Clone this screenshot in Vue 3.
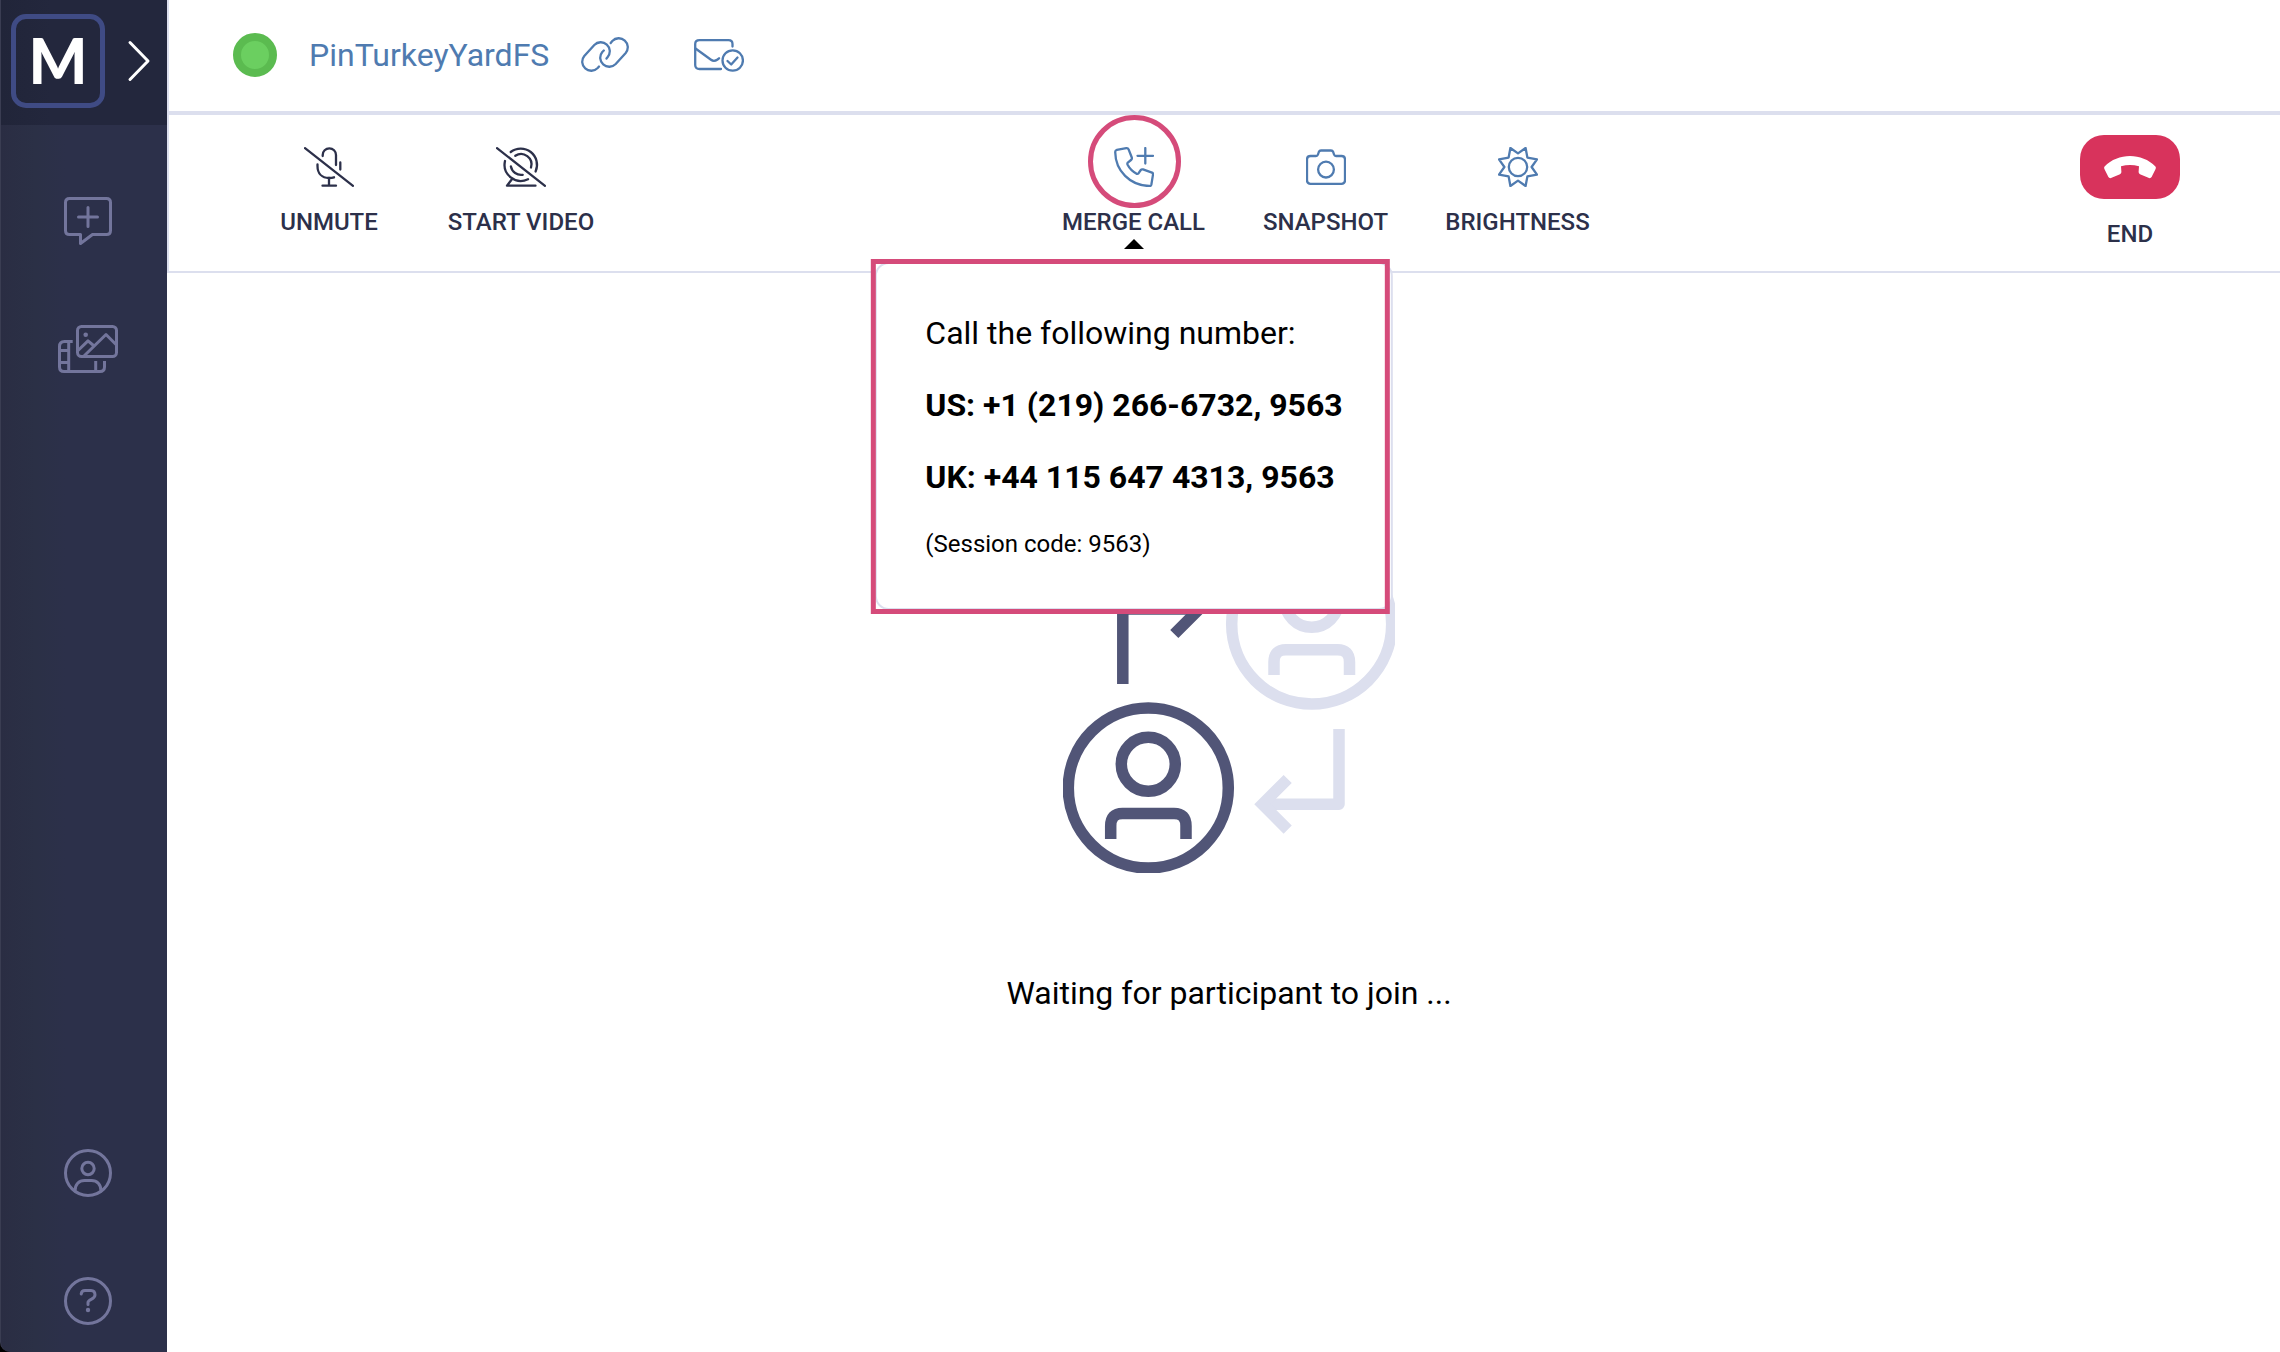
<template>
  <div class="app-shell">
    <!-- Sidebar -->
    <aside class="sidebar">
      <div class="brand">
        <a href="#" class="logo" aria-label="Home">M</a>
        <button type="button" class="expand-btn" aria-label="Expand menu">
          <svg width="24" height="42" viewBox="0 0 24 42" class="chevron">
            <path d="M3 2.5L21 21L3 39.5" />
          </svg>
        </button>
      </div>

      <nav class="side-nav">
        <div class="nav-group">
          <a href="#" class="nav-link" aria-label="New session">
            <svg width="48" height="48" viewBox="0 0 48 48">
              <path d="M5.5 1.5H42.5Q46.5 1.5 46.5 5.5V33.5Q46.5 37.5 42.5 37.5H28.5L16.5 46.5V37.5H5.5Q1.5 37.5 1.5 33.5V5.5Q1.5 1.5 5.5 1.5Z" />
              <path d="M24 10.5V29.5M14.5 20H33.5" />
            </svg>
          </a>
          <a href="#" class="nav-link" aria-label="Media gallery">
            <svg width="60" height="48" viewBox="0 0 60 48">
              <rect x="19.5" y="1.5" width="39" height="30" rx="4" />
              <circle cx="27.7" cy="9.7" r="2.3" class="solid" />
              <path d="M26 31L48 9.5L58 19.5M20 25.5L30 15.8L35.5 20.5" />
              <path class="butt" d="M14.7 16.5H6.5Q1.5 16.5 1.5 21.5V42Q1.5 46.5 6 46.5H42Q46.5 46.5 46.5 42V36" />
              <path class="butt" d="M10.7 16.5V46.5M37.7 36V46.5M1.5 25.5H10.7M1.5 37.5H10.7" />
            </svg>
          </a>
        </div>
        <div class="nav-group">
          <a href="#" class="nav-link" aria-label="Account">
            <svg width="48" height="48" viewBox="0 0 48 48">
              <circle cx="24" cy="24" r="22.5" />
              <circle cx="24" cy="19.5" r="6.2" />
              <path d="M11 42C11 35.5 15 31.5 20.5 31.5H27.5C33 31.5 37 35.5 37 42" />
            </svg>
          </a>
          <a href="#" class="nav-link" aria-label="Help">
            <svg width="48" height="48" viewBox="0 0 48 48">
              <circle cx="24" cy="24" r="22.5" />
              <path d="M17.2 17Q17.5 13.5 21 13.5H27Q31 13.5 31 18C31 22.5 24 22 24 25.5V27.5" />
              <circle cx="24" cy="33" r="2.2" class="solid" />
            </svg>
          </a>
        </div>
      </nav>
    </aside>

    <main class="main">
      <!-- Session header -->
      <header class="session-bar">
        <span class="status-dot"></span>
        <span class="session-name">{{ sessionName }}</span>
        <button type="button" class="icon-btn" aria-label="Copy link">
          <svg width="48" height="36" viewBox="0 0 48 36">
            <path d="M18 29.5L16.7 31A9 9 0 0 1 3.3 19L13.3 8A9 9 0 0 1 26.7 20L25.5 21.5" />
            <path d="M29.7 6L31.3 4A9 9 0 0 1 44.7 16L34.7 27A9 9 0 0 1 21.3 15L22.8 13.5" />
          </svg>
        </button>
        <button type="button" class="icon-btn mail-btn" aria-label="Send invite">
          <svg width="50" height="36" viewBox="0 0 50 36">
            <path d="M27 32H5.5Q1.2 32 1.2 28V7Q1.2 3.2 5.5 3.2H34.5Q38.5 3.2 38.5 7V9.5" />
            <path d="M1.5 11.5L17 22.8Q20 25 23.5 22.5L25 21.3" />
            <circle cx="38.7" cy="23.5" r="10.2" />
            <path d="M33.5 24L37.2 27.5L43.5 20.5" />
          </svg>
        </button>
      </header>

      <!-- Call toolbar -->
      <section class="toolbar">
        <div class="tool-group">
          <button type="button" class="tool">
            <svg class="tool-icon muted" width="50" height="40" viewBox="0 0 50 40">
              <path d="M1 1.2L49 38.8" />
              <path d="M18.7 9V8A6.6 6.6 0 0 1 32 8V18" />
              <path d="M13.5 17.5V19C13.5 26.5 18 31 25 31Q28 31 30 30.3" />
              <path d="M36.3 15.5V22.5M25 31V38.7M18.5 38.7H32" />
            </svg>
            <span class="tool-label">UNMUTE</span>
          </button>
          <button type="button" class="tool">
            <svg class="tool-icon muted" width="50" height="40" viewBox="0 0 50 40">
              <path d="M1 1.2L49 38.8" />
              <path d="M14.7 5A16.3 16.3 0 0 1 39.6 24.5" />
              <path d="M9 14A16.3 16.3 0 0 0 32 32.3" />
              <path d="M19.3 8.8A10.4 10.4 0 0 1 35 20.5" />
              <path d="M14.9 19.5A10.4 10.4 0 0 0 26.7 27.8" />
              <path d="M15.7 32.5L11 38.7H39.5" />
            </svg>
            <span class="tool-label">START VIDEO</span>
          </button>
        </div>

        <div class="tool-group">
          <div class="tool-wrap">
            <button type="button" class="tool" :aria-expanded="mergeOpen" @click="mergeOpen = !mergeOpen">
              <svg class="tool-icon" width="40" height="40" viewBox="0 0 40 40">
                <path d="M2.8 2.8L12.3 1.2Q14 1 14.6 2.4L17.8 10.5Q18.2 12 17 13L13.8 15.6Q13 16.5 13.6 17.8C15.5 21.5 18.5 24.5 22.6 26.8Q23.8 27.2 24.6 26.2L26.8 23Q27.6 22 29 22.4L38 25.6Q39.3 26.2 39 27.6L37.4 37.4Q37 39.2 35.2 39C16 38.5 1.5 24 1.2 5Q1.2 3.2 2.8 2.8Z" />
                <path d="M31.3 1V16.5M23.5 8.8H39" />
              </svg>
              <span class="tool-label">MERGE CALL</span>
            </button>
            <span class="highlight-ring"></span>
            <span v-if="mergeOpen" class="popover-arrow"></span>
            <div v-if="mergeOpen" class="popover">
              <p>Call the following number:</p>
              <p v-for="n in numbers" :key="n.region" class="number">{{ n.region }}: {{ n.phone }}, {{ sessionCode }}</p>
              <p class="code">(Session code: {{ sessionCode }})</p>
            </div>
          </div>
          <button type="button" class="tool">
            <svg class="tool-icon" width="40" height="40" viewBox="0 0 40 40">
              <path d="M4.5 9H10Q11.5 9 12 7.5L12.8 5Q13.4 3.5 15 3.5H25Q26.6 3.5 27.2 5L28 7.5Q28.5 9 30 9H35.5Q39 9 39 12.5V33.3Q39 36.8 35.5 36.8H4.5Q1 36.8 1 33.3V12.5Q1 9 4.5 9Z" />
              <circle cx="20" cy="22.6" r="7.9" />
            </svg>
            <span class="tool-label">SNAPSHOT</span>
          </button>
          <button type="button" class="tool">
            <svg class="tool-icon" width="40" height="40" viewBox="0 0 40 40">
              <path d="M12.4 1L20 6.4L27.6 1L29.4 10.6L39 12.4L33.6 20L39 27.6L29.4 29.4L27.6 39L20 33.6L12.4 39L10.6 29.4L1 27.6L6.4 20L1 12.4L10.6 10.6Z" />
              <circle cx="20" cy="20" r="9.2" />
            </svg>
            <span class="tool-label">BRIGHTNESS</span>
          </button>
        </div>

        <div class="tool-group">
          <button type="button" class="tool end-tool">
            <span class="end-pill">
              <svg width="52" height="23" viewBox="0 0 52 23">
                <path d="M0.6 10.5C14 -3.5 38 -3.5 51.4 10.5Q52.2 11.5 51.6 13L47.6 21Q46.7 22.5 45 22L36 18.3Q34.6 17.6 34.6 16L35 10.3Q26 7.5 17 10.3L17.4 16Q17.4 17.6 16 18.3L7 22Q5.3 22.5 4.4 21L0.4 13Q-0.2 11.5 0.6 10.5Z" />
              </svg>
            </span>
            <span class="tool-label">END</span>
          </button>
        </div>
      </section>

      <!-- Waiting room -->
      <section class="stage">
        <svg class="waiting-art" width="332" height="332" viewBox="0 0 332 332">
          <g class="art-light">
            <circle cx="248.7" cy="83" r="80" />
            <circle cx="248.7" cy="59.3" r="27" />
            <path d="M211 134V121Q211 108.7 223 108.7H274.5Q286.5 108.7 286.5 121V134" />
            <path d="M276 188V263.3H199.4" class="round-join" />
            <path d="M224.7 238L199.4 263.3L224.7 288.6" />
          </g>
          <g class="art-dark">
            <circle cx="85.3" cy="247" r="80" />
            <circle cx="85.3" cy="223.3" r="27" />
            <path d="M47.7 298V285Q47.7 272.4 59.5 272.4H111Q123 272.4 123 285V298" />
            <path d="M59.8 143V68H136.3" class="round-join" />
            <path d="M111.3 93L136.3 68L111.3 43" />
          </g>
        </svg>
        <p class="waiting-text">Waiting for participant to join ...</p>
      </section>
    </main>
  </div>
</template>

<script setup>
import { ref } from 'vue'

const sessionName = 'PinTurkeyYardFS'
const sessionCode = '9563'

const numbers = [
  { region: 'US', phone: '+1 (219) 266-6732' },
  { region: 'UK', phone: '+44 115 647 4313' }
]

const mergeOpen = ref(true)
</script>

<style>
body {
  margin: 0;
  background: #fff;
}
</style>

<style scoped>
.app-shell {
  display: flex;
  min-height: 100vh;
  background: #000;
  color: #000;
  font-family: Roboto, "Liberation Sans", sans-serif;
  font-size: 32px;
  line-height: 40px;
}

button {
  padding: 0;
  border: 0;
  background: none;
  font: inherit;
  color: inherit;
  cursor: pointer;
}

p {
  margin: 0;
}

svg {
  display: block;
  fill: none;
}

/* Sidebar */
.sidebar {
  flex: 0 0 167px;
  box-sizing: border-box;
  display: flex;
  flex-direction: column;
  border-left: 1px solid #3a3d52;
  border-bottom-left-radius: 10px;
  background: linear-gradient(90deg, #2a2d43 0, #2b3046 34px, #2c304a 64px);
}

.brand {
  display: flex;
  align-items: center;
  gap: 22px;
  height: 125px;
  box-sizing: border-box;
  padding: 0 0 3px 10px;
  background: linear-gradient(90deg, #212539 0, #23273d 50px);
}

.logo {
  box-sizing: border-box;
  width: 94px;
  height: 94px;
  border: 5px solid #3f4b84;
  border-radius: 15px;
  color: #fff;
  font-family: Lato, "DejaVu Sans", sans-serif;
  font-size: 62px;
  font-weight: 900;
  line-height: 82px;
  text-align: center;
  text-decoration: none;
}

.chevron {
  stroke: #fff;
  stroke-width: 3;
  stroke-linecap: round;
  stroke-linejoin: round;
}

.side-nav {
  flex: 1;
  display: flex;
  flex-direction: column;
  justify-content: space-between;
  padding: 72px 0 27px 8px;
}

.nav-group {
  display: flex;
  flex-direction: column;
  align-items: center;
  gap: 80px;
}

.nav-link svg {
  stroke: #73759c;
  stroke-width: 3;
  stroke-linecap: round;
  stroke-linejoin: round;
}

.nav-link .butt {
  stroke-linecap: butt;
}

.nav-link .solid {
  fill: #73759c;
  stroke: none;
}

/* Header */
.main {
  flex: 1;
  min-width: 0;
  background: #fff;
}

.session-bar {
  display: flex;
  align-items: center;
  gap: 32px;
  height: 109px;
  padding: 0 0 2px 64px;
  border-left: 2px solid #dcdfee;
  border-bottom: 4px solid #dcdfee;
}

.status-dot {
  box-sizing: border-box;
  width: 44px;
  height: 44px;
  border: 8px solid #5bbb50;
  border-radius: 50%;
  background: #6bcf60;
}

.session-name {
  color: #4f7bb0;
}

.icon-btn svg {
  stroke: #4f7bb0;
  stroke-width: 2.3;
  stroke-linecap: round;
  stroke-linejoin: round;
}

.mail-btn {
  margin-left: 33px;
}

/* Toolbar */
.toolbar {
  display: flex;
  justify-content: space-between;
  height: 156px;
  padding: 0 54px 0 64px;
  border-left: 2px solid #dcdfee;
  border-bottom: 2px solid #dcdfee;
}

.tool-group {
  display: flex;
}

.tool {
  display: flex;
  flex-direction: column;
  align-items: center;
  gap: 20px;
  width: 192px;
  height: 156px;
  padding-top: 32px;
}

.tool-icon {
  stroke: #4f7bb0;
  stroke-width: 2.3;
  stroke-linejoin: round;
  stroke-linecap: round;
}

.tool-icon.muted {
  stroke: #2c304a;
}

.tool-label {
  color: #2c304a;
  font-size: 24px;
  font-weight: 500;
  line-height: 30px;
}

.end-tool {
  padding-top: 20px;
}

.end-pill {
  display: flex;
  align-items: center;
  justify-content: center;
  width: 100px;
  height: 64px;
  border-radius: 24px;
  background: #d8335c;
}

.end-pill svg {
  fill: #fff;
}

/* Merge call popover */
.tool-wrap {
  position: relative;
}

.highlight-ring {
  position: absolute;
  top: 0;
  left: 50%;
  box-sizing: border-box;
  width: 93px;
  height: 93px;
  margin-left: -46px;
  border: 5px solid #d54b7a;
  border-radius: 50%;
  pointer-events: none;
}

.popover-arrow {
  position: absolute;
  top: 124px;
  left: 50%;
  margin-left: -10px;
  border: 10px solid transparent;
  border-top: 0;
  border-bottom-color: #000;
}

.popover {
  position: absolute;
  top: 147px;
  left: 50%;
  z-index: 2;
  box-sizing: border-box;
  display: flex;
  flex-direction: column;
  gap: 32px;
  transform: translateX(-50%);
  padding: 49px 48px 49px 49px;
  border: 2px solid #dcdfee;
  border-radius: 14px;
  background: #fff;
  white-space: nowrap;
}

.popover::after {
  content: '';
  position: absolute;
  inset: -5px 1px -6px -6px;
  border: 5px solid #d54b7a;
}

.number {
  font-weight: 700;
}

.code {
  font-size: 24px;
  line-height: 30px;
}

/* Stage */
.stage {
  display: flex;
  flex-direction: column;
  align-items: center;
  gap: 100px;
  padding: 268px 0 0 11px;
}

.waiting-art {
  stroke-width: 11.5;
}

.art-dark {
  stroke: #515577;
}

.art-light {
  stroke: #dcdfee;
}

.round-join {
  stroke-linejoin: round;
}
</style>
